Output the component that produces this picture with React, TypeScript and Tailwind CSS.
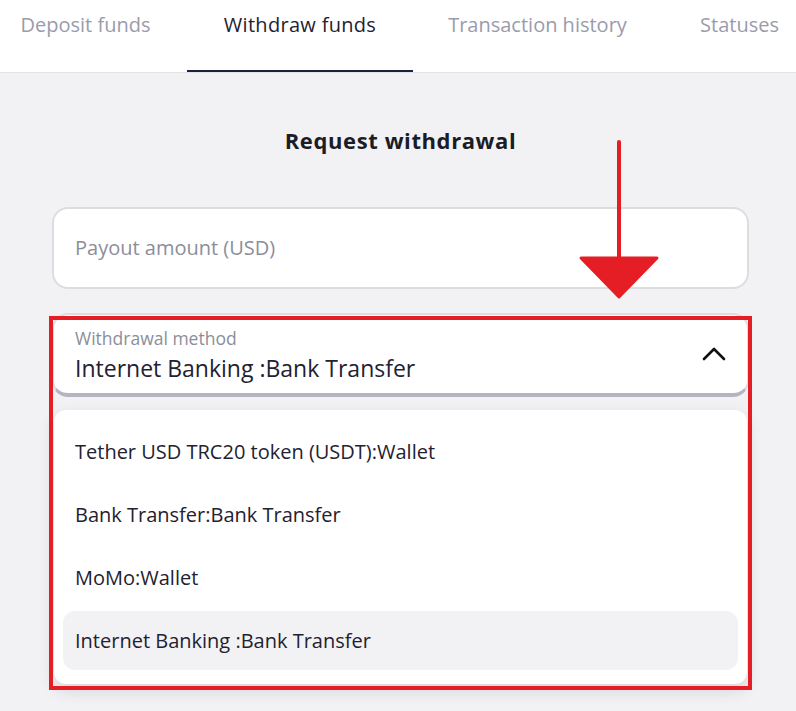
import { useState } from 'react'

const tabs = [
  { label: 'Deposit funds', w: 'w-[203px]' },
  { label: 'Withdraw funds', w: 'w-[226px]' },
  { label: 'Transaction history', w: 'w-[249px]' },
  { label: 'Statuses', w: 'w-[155px]' },
]

const methods = [
  'Tether USD TRC20 token (USDT):Wallet',
  'Bank Transfer:Bank Transfer',
  'MoMo:Wallet',
  'Internet Banking :Bank Transfer',
]

function App() {
  const [active] = useState(1)
  const [selected] = useState(3)

  return (
    <div
      className="relative h-[711px] w-[796px] overflow-hidden bg-[#f2f2f5]"
      style={{ fontFamily: '"Open Sans", Lato, sans-serif' }}
    >
      <header className="flex h-[73px] border-b border-[#e3e3e8] bg-white">
        <div className="-ml-[16px] flex shrink-0">
          {tabs.map((t, i) => (
            <div
              key={t.label}
              className={
                i === active
                  ? `${t.w} shrink-0 whitespace-nowrap border-b-2 border-[#1d2140] pt-[11px] text-center text-[20px] leading-[28px] tracking-[0.3px] text-[#1f2230]`
                  : `${t.w} shrink-0 whitespace-nowrap pt-[11px] text-center text-[20px] leading-[28px] text-[#9a9cab]`
              }
            >
              {t.label}
            </div>
          ))}
        </div>
      </header>

      <main className="flex flex-col pl-[52px]">
        <h2 className="mt-[53px] w-[697px] text-center text-[22px] font-bold leading-[28px] tracking-[0.6px] text-[#1b1c26]">
          Request withdrawal
        </h2>

        <div className="mt-[53px] flex h-[82px] w-[697px] items-center rounded-2xl border-2 border-[#dcdce1] bg-white px-[21px]">
          <span className="text-[20px] text-[#8b8e99]">Payout amount (USD)</span>
        </div>

        <div className="mt-[24px] flex h-[84px] w-[697px] items-center justify-between rounded-2xl border-2 border-b-4 border-[#dcdce1] border-b-[#b4b5c0] bg-white pl-[21px] pr-[21px]">
          <div className="flex flex-col pt-[2px]">
            <span className="text-[17.5px] leading-[20px] text-[#8b8e99]">Withdrawal method</span>
            <span className="mt-[6px] text-[23px] leading-[28px] text-[#1f2230]">{methods[selected]}</span>
          </div>
          <svg width="24" height="14" viewBox="0 0 24 14" fill="none">
            <polyline points="2,12 12,2 22,12" stroke="#111" strokeWidth="2.6" strokeLinecap="round" strokeLinejoin="round" />
          </svg>
        </div>

        <div className="ml-[2px] mt-[13px] flex w-[693px] flex-col gap-[4px] rounded-xl bg-white px-[9px] pb-[14px] pt-[12px] shadow-[0_6px_16px_rgba(30,30,60,0.14)]">
          {methods.map((m, i) => (
            <div
              key={m}
              className={
                i === selected
                  ? 'flex h-[59px] items-center rounded-xl bg-[#f2f2f5] px-[12px] text-[20px] text-[#1f2230]'
                  : 'flex h-[59px] items-center px-[12px] text-[20px] text-[#1f2230]'
              }
            >
              {m}
            </div>
          ))}
        </div>
      </main>

      {/* annotation: arrow */}
      <svg className="absolute left-[578px] top-[138px]" width="82" height="162" viewBox="0 0 82 162">
        <line x1="41" y1="4" x2="41" y2="125" stroke="#e51e25" strokeWidth="4" strokeLinecap="round" />
        <polygon points="3,120 79,120 41,159" fill="#e51e25" stroke="#e51e25" strokeWidth="3" strokeLinejoin="round" />
      </svg>

      {/* annotation: highlight box */}
      <div className="absolute left-[49px] top-[316px] h-[374px] w-[703px] border-4 border-[#e51e25]" />
    </div>
  )
}

export default App
